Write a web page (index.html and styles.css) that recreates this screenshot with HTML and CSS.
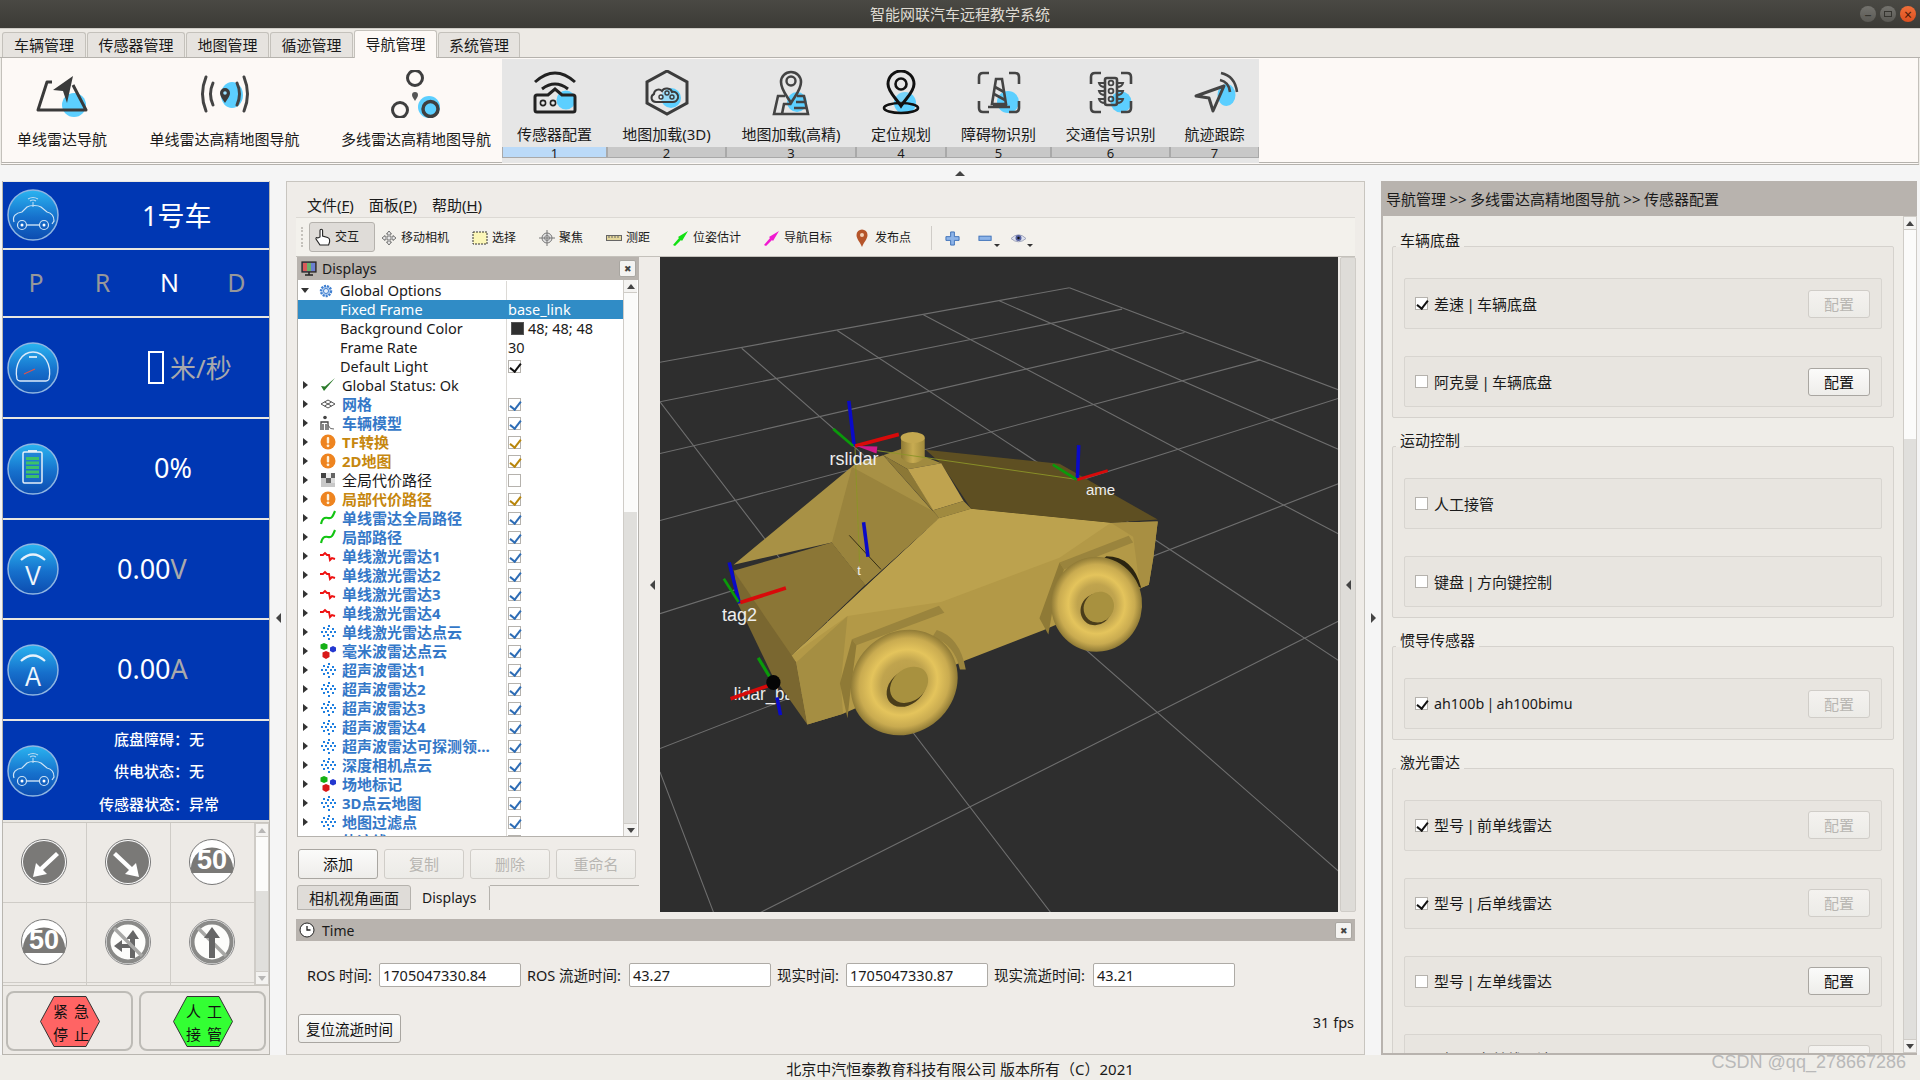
FILE: index.html
```html
<!DOCTYPE html>
<html lang="zh-CN">
<head>
<meta charset="utf-8">
<title>智能网联汽车远程教学系统</title>
<link rel="stylesheet" href="styles.css">
</head>
<body>
<svg class="defs" width="0" height="0" aria-hidden="true">
  <defs>
    <linearGradient id="orb" x1="0" y1="0" x2="0" y2="1"><stop offset="0" stop-color="#2ab4f0"/><stop offset=".55" stop-color="#1670cc"/><stop offset="1" stop-color="#0c4cb0"/></linearGradient>
    <linearGradient id="cyl" x1="0" y1="0" x2="1" y2="0"><stop offset="0" stop-color="#8f7a34"/><stop offset=".5" stop-color="#c8ac52"/><stop offset="1" stop-color="#a08a3c"/></linearGradient>
    <radialGradient id="tire" cx=".5" cy=".5" r=".5"><stop offset="0" stop-color="#b59a48"/><stop offset=".42" stop-color="#c0a44e"/><stop offset=".62" stop-color="#e4c45c"/><stop offset=".84" stop-color="#c9ab50"/><stop offset="1" stop-color="#8f7a36"/></radialGradient>
    <clipPath id="ame-clip"><rect x="420" y="228" width="50" height="20"/></clipPath>
    <symbol id="car" viewBox="0 0 52 52"><path d="M7 33c-2-6 2-9 8-10l5-5c3-2 11-2 14 0l6 5c5 1 7 4 7 9l-2 3" fill="none" stroke="#cfe4f6" stroke-width="1.200"/><path d="M26 18v-5M21 10q5-3 10 0M23 12q3-2 6 0" fill="none" stroke="#b8daf2" stroke-width="1.100"/><path d="M20 36h12" stroke="#dcecf9" stroke-width="1.300"/><circle cx="15" cy="36" r="4.500" fill="none" stroke="#cfe4f6" stroke-width="1.200"/><circle cx="37" cy="36" r="4.500" fill="none" stroke="#cfe4f6" stroke-width="1.200"/><circle cx="15" cy="36" r="1.500" fill="#fff"/><circle cx="37" cy="36" r="1.500" fill="#fff"/></symbol>
    <symbol id="i-gear" viewBox="0 0 16 16"><circle cx="8" cy="8" r="5" fill="#bcd4f2" stroke="#3f7fd0" stroke-width="2.400" stroke-dasharray="2 1"/><circle cx="8" cy="8" r="2.500" fill="#e8f0fb" stroke="#3f7fd0"/></symbol>
    <symbol id="i-check" viewBox="0 0 16 16"><path d="M1 9l3 5 11-13-10 8.500z" fill="#2b7a2b"/></symbol>
    <symbol id="i-grid" viewBox="0 0 16 16"><path d="M1 8l7-4 7 4-7 4zM4.500 6l7 4M11.500 6l-7 4" fill="none" stroke="#555" stroke-width="1"/></symbol>
    <symbol id="i-robot" viewBox="0 0 16 16"><circle cx="5" cy="2.500" r="1.800" fill="#444"/><path d="M1 15V7h7v8M3 9v6M6 9v6" fill="none" stroke="#444" stroke-width="1.300"/><path d="M8 10q2 5 6 4" fill="none" stroke="#666"/></symbol>
    <symbol id="i-warn" viewBox="0 0 16 16"><circle cx="8" cy="8" r="7.500" fill="#ee8420"/><rect x="6.800" y="3" width="2.400" height="6.500" rx="1" fill="#fff3dc"/><circle cx="8" cy="11.800" r="1.400" fill="#fff3dc"/></symbol>
    <symbol id="i-map" viewBox="0 0 16 16"><path d="M1 1h5v5H1z" fill="#444"/><path d="M6 6h5v5H6zM11 1h4v5h-4z" fill="#666"/><path d="M1 6h5v9H1zM6 11h9v4H6z" fill="#c8c8c8"/><path d="M6 1h5v5H6z" fill="#eee"/><path d="M11 6h4v5h-4z" fill="#ddd"/></symbol>
    <symbol id="i-path" viewBox="0 0 16 16"><path d="M1 14c1-5 3-7 7-6s5-2 7-7" fill="none" stroke="#12c412" stroke-width="2.200"/></symbol>
    <symbol id="i-scan" viewBox="0 0 16 16"><path d="M0 7l3 0 2-2 2 2 2 0 1 5 2-2 3 1" fill="none" stroke="#ee1111" stroke-width="1.900"/></symbol>
    <symbol id="i-cloud" viewBox="0 0 16 16"><g fill="#1f7fe0"><rect x="8" y="1" width="2" height="2"/><rect x="3" y="3" width="2" height="2"/><rect x="7" y="4" width="2" height="2"/><rect x="12" y="4" width="2" height="2"/><rect x="1" y="7" width="2" height="2"/><rect x="5" y="7" width="2" height="2"/><rect x="10" y="7" width="2" height="2"/><rect x="14" y="7" width="2" height="2"/><rect x="3" y="11" width="2" height="2"/><rect x="7" y="10" width="2" height="2"/><rect x="12" y="11" width="2" height="2"/><rect x="8" y="14" width="2" height="2"/></g></symbol>
    <symbol id="i-rgb" viewBox="0 0 16 16"><path d="M4 0l3.500 1.500V5.500L4 7 .5 5.500v-4z" fill="#14b014"/><path d="M13 3l3 1.500V8l-3 1.500L10 8V4.500z" fill="#2438d0"/><path d="M6 8l3.500 1.500V14L6 16l-3.500-2V9.500z" fill="#d81818"/></symbol>
  </defs>
</svg>

<header class="titlebar">
  <span></span>
  <span class="title-text">智能网联汽车远程教学系统</span>
  <div class="win-btns"><i class="wbtn">&#8211;</i><i class="wbtn"><b class="wbox"></b></i><i class="wbtn wclose">&#215;</i></div>
</header>

<nav class="tabs">
  <span class="tab w84">车辆管理</span><span class="tab w98">传感器管理</span><span class="tab w83">地图管理</span><span class="tab w83">循迹管理</span><span class="tab tab-on w83">导航管理</span><span class="tab w82">系统管理</span>
</nav>

<section class="ribbon">
  <div class="rib-item ri-1">
    <svg class="rib-icon" viewBox="0 0 60 48"><ellipse cx="42" cy="35" rx="12" ry="12" fill="#5ccfff"/><path d="M20 12h-5L6 40h48L41 15" fill="none" stroke="#3a3a3a" stroke-width="3" stroke-linejoin="round"/><path d="M41 6L21 20l10 1 4 12z" fill="#3a3a3a"/></svg>
    <span>单线雷达导航</span>
  </div>
  <div class="rib-item ri-2">
    <svg class="rib-icon" viewBox="0 0 60 48"><ellipse cx="37" cy="25" rx="11" ry="13" fill="#5ccfff"/><path d="M11 7Q4 24 11 41M18 13Q13 24 18 35M49 7Q56 24 49 41M42 13Q47 24 42 35" fill="none" stroke="#444" stroke-width="3" stroke-linecap="round"/><path d="M30 33c-2-3-5-7-5-10a5 5 0 0 1 10 0c0 3-3 7-5 10z" fill="#3a3a3a"/><circle cx="30" cy="23" r="1.800" fill="#9adfff"/></svg>
    <span>单线雷达高精地图导航</span>
  </div>
  <div class="rib-item ri-3">
    <svg class="rib-icon" viewBox="0 0 60 48"><circle cx="43" cy="37" r="11" fill="#5ccfff"/><circle cx="29" cy="8" r="7.500" fill="none" stroke="#3f3f3f" stroke-width="3"/><circle cx="14" cy="40" r="7.500" fill="none" stroke="#3f3f3f" stroke-width="3"/><circle cx="44.500" cy="39" r="7.500" fill="none" stroke="#3f3f3f" stroke-width="3.500"/><path d="M29 31c-1-2-3-4-3-6a3 3 0 0 1 6 0c0 2-2 4-3 6z" fill="#555"/></svg>
    <span>多线雷达高精地图导航</span>
  </div>
  <div class="rib-group">
    <div class="g-item w105">
      <svg class="g-icon" viewBox="0 0 60 48"><circle cx="41" cy="30" r="9.500" fill="#5ccfff"/><path d="M10 12Q30-6 50 12M17 19Q30 9 43 19" fill="none" stroke="#222" stroke-width="3"/><path d="M12 25h11l7-6 7 6h11q2 0 2 2v13q0 2-2 2H12q-2 0-2-2V27q0-2 2-2z" fill="none" stroke="#222" stroke-width="3"/><circle cx="18" cy="33" r="2.600" fill="none" stroke="#222" stroke-width="1.600"/><circle cx="28" cy="33" r="2.600" fill="none" stroke="#222" stroke-width="1.600"/></svg>
      <span class="g-label">传感器配置</span><b class="g-num g-num-on">1</b>
    </div>
    <div class="g-item w119">
      <svg class="g-icon" viewBox="0 0 60 48"><circle cx="34" cy="28" r="10" fill="#5ccfff"/><path d="M30 1l20 11v21L30 44 10 33V12z" fill="none" stroke="#3c3c3c" stroke-width="3"/><path d="M19 32c-5 0-6-6-2-8 0-4 5-6 8-3 2-4 9-3 10 1 4-1 7 3 6 6-1 3-3 4-5 4z" fill="#eee" fill-opacity=".4" stroke="#3c3c3c" stroke-width="2"/><g fill="none" stroke="#3c3c3c" stroke-width="1.400"><circle cx="24" cy="27" r="2"/><circle cx="30" cy="23" r="2"/><circle cx="35" cy="27" r="2"/></g></svg>
      <span class="g-label">地图加载(3D)</span><b class="g-num">2</b>
    </div>
    <div class="g-item w130">
      <svg class="g-icon" viewBox="0 0 60 48"><circle cx="36" cy="32" r="10" fill="#5ccfff"/><path d="M30 33C26 26 20 20 20 12a10 10 0 0 1 20 0c0 8-6 14-10 21z" fill="none" stroke="#444" stroke-width="2.600"/><circle cx="30" cy="11" r="4.500" fill="none" stroke="#444" stroke-width="2.400"/><path d="M24 26H17l-4 18h34l-4-18h-7M21 44l2-10h7M33 38h13M35 32h9" fill="none" stroke="#444" stroke-width="2.600"/></svg>
      <span class="g-label">地图加载(高精)</span><b class="g-num">3</b>
    </div>
    <div class="g-item w90">
      <svg class="g-icon" viewBox="0 0 60 48"><circle cx="34" cy="33" r="11" fill="#5ccfff"/><ellipse cx="30" cy="38" rx="17" ry="5" fill="none" stroke="#111" stroke-width="2.600"/><path d="M30 36C25 28 17 22 17 14a13 13 0 0 1 26 0c0 8-8 14-13 22z" fill="#e6e6e6" fill-opacity=".2" stroke="#111" stroke-width="3"/><circle cx="30" cy="14" r="5.500" fill="none" stroke="#111" stroke-width="2.600"/></svg>
      <span class="g-label">定位规划</span><b class="g-num">4</b>
    </div>
    <div class="g-item w105">
      <svg class="g-icon" viewBox="0 0 60 48"><circle cx="39" cy="32" r="11" fill="#5ccfff"/><path d="M10 14V7q0-4 4-4h6M40 3h6q4 0 4 4v7M10 31v7q0 4 4 4h6M40 42h6q4 0 4-4v-7" fill="none" stroke="#444" stroke-width="2.600"/><path d="M27 9h6l4 25H23zM24 35h14M19 37h22" fill="none" stroke="#444" stroke-width="2.600"/><path d="M26 17l9 5M25 24l11 6" stroke="#444" stroke-width="2.600"/></svg>
      <span class="g-label">障碍物识别</span><b class="g-num">5</b>
    </div>
    <div class="g-item w119">
      <svg class="g-icon" viewBox="0 0 60 48"><circle cx="40" cy="32" r="10.500" fill="#5ccfff"/><path d="M10 14V7q0-4 4-4h6M40 3h6q4 0 4 4v7M10 31v7q0 4 4 4h6M40 42h6q4 0 4-4v-7" fill="none" stroke="#444" stroke-width="2.600"/><rect x="24" y="8" width="12" height="27" rx="2" fill="none" stroke="#444" stroke-width="2.600"/><path d="M24 13h-6q1 4 6 4M24 21h-6q1 4 6 4M24 29h-6q1 4 6 4M36 13h6q-1 4-6 4M36 21h6q-1 4-6 4M36 29h6q-1 4-6 4" fill="none" stroke="#444" stroke-width="2"/><g fill="none" stroke="#444" stroke-width="1.800"><circle cx="30" cy="13" r="2.400"/><circle cx="30" cy="21" r="2.400"/><circle cx="30" cy="29" r="2.400"/></g></svg>
      <span class="g-label">交通信号识别</span><b class="g-num">6</b>
    </div>
    <div class="g-item w89">
      <svg class="g-icon" viewBox="0 0 60 48"><ellipse cx="41.500" cy="25" rx="9" ry="11" fill="#5ccfff"/><path d="M39 16L11 26l13 2 4 13z" fill="none" stroke="#444" stroke-width="3" stroke-linejoin="round"/><path d="M36 3Q50 6 52 22M35 10q9 2 10 12" fill="none" stroke="#444" stroke-width="2.600"/></svg>
      <span class="g-label">航迹跟踪</span><b class="g-num">7</b>
    </div>
  </div>
</section>

<div class="sash"><i class="tri-up"></i></div>

<main class="main">
  <aside class="left">
    <div class="stat h66">
      <svg class="orb" viewBox="0 0 52 52"><circle cx="26" cy="26" r="25" fill="url(#orb)" stroke="#8fb6e2" stroke-width="1.500"/><use href="#car"/></svg>
      <span class="val v-car">1号车</span>
    </div>
    <div class="gears h66"><span>P</span><span>R</span><span class="gear-on">N</span><span>D</span></div>
    <div class="stat h99">
      <svg class="orb" viewBox="0 0 52 52"><circle cx="26" cy="26" r="25" fill="url(#orb)" stroke="#8fb6e2" stroke-width="1.500"/><path d="M10 37C7 22 15 10 26 10s19 12 16 27q-1 2-3 2H13q-2 0-3-2z" fill="none" stroke="#dbeafa" stroke-width="1.300"/><path d="M22 15h8" stroke="#fff" stroke-width="1.500"/><path d="M17 32l11-5" stroke="#e0524a" stroke-width="1.200"/></svg>
      <span class="val v-speed"><i class="tofu"></i><em class="dim">米/秒</em></span>
    </div>
    <div class="stat h99">
      <svg class="orb" viewBox="0 0 52 52"><circle cx="26" cy="26" r="25" fill="url(#orb)" stroke="#8fb6e2" stroke-width="1.500"/><path d="M21 9V7h9v2" fill="#dfe9f5"/><rect x="16" y="9" width="19" height="31" rx="1.500" fill="#1f6ec8" fill-opacity=".5" stroke="#e6f0f9" stroke-width="1.500"/><g fill="#3cc06a"><rect x="19" y="14" width="13" height="3"/><rect x="19" y="18.500" width="13" height="3"/><rect x="19" y="23" width="13" height="3"/><rect x="19" y="27.500" width="13" height="3"/><rect x="19" y="32" width="13" height="3"/></g></svg>
      <span class="val v-pct">0%</span>
    </div>
    <div class="stat h98">
      <svg class="orb" viewBox="0 0 52 52"><circle cx="26" cy="26" r="25" fill="url(#orb)" stroke="#8fb6e2" stroke-width="1.500"/><path d="M14 17Q26 6 38 17" fill="none" stroke="#e8f2fb" stroke-width="2.200"/><text x="26" y="42" text-anchor="middle" textLength="16" lengthAdjust="spacingAndGlyphs" class="orb-letter">V</text></svg>
      <span class="val v-num">0.00<em class="dim">V</em></span>
    </div>
    <div class="stat h99">
      <svg class="orb" viewBox="0 0 52 52"><circle cx="26" cy="26" r="25" fill="url(#orb)" stroke="#8fb6e2" stroke-width="1.500"/><path d="M14 17Q26 6 38 17" fill="none" stroke="#e8f2fb" stroke-width="2.200"/><text x="26" y="42" text-anchor="middle" textLength="16" lengthAdjust="spacingAndGlyphs" class="orb-letter">A</text></svg>
      <span class="val v-num">0.00<em class="dim">A</em></span>
    </div>
    <div class="stat h99">
      <svg class="orb" viewBox="0 0 52 52"><circle cx="26" cy="26" r="25" fill="url(#orb)" stroke="#8fb6e2" stroke-width="1.500"/><use href="#car"/></svg>
      <dl class="status">
        <dt>底盘障碍：</dt><dd>无</dd>
        <dt>供电状态：</dt><dd>无</dd>
        <dt>传感器状态：</dt><dd>异常</dd>
      </dl>
    </div>
    <div class="signs-wrap">
      <div class="signs">
        <div class="sign"><svg viewBox="0 0 46 46"><circle cx="23" cy="23" r="22.500" fill="#fff" stroke="#777"/><circle cx="23" cy="23" r="21" fill="#7a7977"/><path d="M35 13L19 28l-4-4-3 14 14-3-4-4 16-15z" fill="#fff"/></svg></div>
        <div class="sign"><svg viewBox="0 0 46 46"><circle cx="23" cy="23" r="22.500" fill="#fff" stroke="#777"/><circle cx="23" cy="23" r="21" fill="#7a7977"/><path d="M11 13L27 28l4-4 3 14-14-3 4-4L8 16z" fill="#fff"/></svg></div>
        <div class="sign"><svg viewBox="0 0 46 46"><circle cx="23" cy="23" r="22.500" fill="#fff" stroke="#777"/><path d="M2.500 34A21 21 0 1 1 43.500 34z" fill="#7a7977"/><text x="23" y="30" text-anchor="middle" class="sign-num">50</text></svg></div>
        <div class="sign"><svg viewBox="0 0 46 46"><circle cx="23" cy="23" r="22.500" fill="#fff" stroke="#777"/><path d="M2.500 34A21 21 0 1 1 43.500 34z" fill="#7a7977"/><text x="23" y="30" text-anchor="middle" class="sign-num">50</text></svg></div>
        <div class="sign"><svg viewBox="0 0 46 46"><circle cx="23" cy="23" r="22.500" fill="#fff" stroke="#888"/><circle cx="23" cy="23" r="19.500" fill="#fdfdfb" stroke="#8a8a88" stroke-width="4"/><path d="M28 11l6 9h-4v19h-5V29H17v4l-8-6 8-6v4h8V20h-4z" fill="#666"/><path d="M9 9l28 28" stroke="#a8a8a6" stroke-width="3.500"/></svg></div>
        <div class="sign"><svg viewBox="0 0 46 46"><circle cx="23" cy="23" r="22.500" fill="#fff" stroke="#888"/><circle cx="23" cy="23" r="19.500" fill="#fdfdfb" stroke="#8a8a88" stroke-width="4"/><path d="M9 9l28 28" stroke="#a8a8a6" stroke-width="3.500"/><path d="M23 8l8 11h-5v20h-6V19h-5z" fill="#666"/></svg></div>
        <div class="sign"></div><div class="sign"></div><div class="sign"></div>
      </div>
      <div class="vbar vbar-left"><i class="sb-btn"><b class="tri-u"></b></i><i class="sb-thumb t-signs"></i><i class="sb-fill"></i><i class="sb-btn sb-low"><b class="tri-d"></b></i></div>
    </div>
    <div class="stops">
      <button class="stop-btn"><svg viewBox="0 0 60 51" class="hex"><polygon points="14,.5 46,.5 59.500,25.500 46,50.500 14,50.500 .5,25.500" fill="#ff6464" stroke="#333"/><text x="13" y="21" class="hex-t">紧</text><text x="34" y="21" class="hex-t">急</text><text x="13" y="44" class="hex-t">停</text><text x="34" y="44" class="hex-t">止</text></svg></button>
      <button class="stop-btn"><svg viewBox="0 0 60 51" class="hex"><polygon points="14,.5 46,.5 59.500,25.500 46,50.500 14,50.500 .5,25.500" fill="#33ff33" stroke="#333"/><text x="13" y="21" class="hex-t">人</text><text x="34" y="21" class="hex-t">工</text><text x="13" y="44" class="hex-t">接</text><text x="34" y="44" class="hex-t">管</text></svg></button>
    </div>
  </aside>

  <div class="gutter"><i class="tri-l"></i></div>

  <section class="mid">
    <div class="menubar"><span>文件(<u>F</u>)</span><span>面板(<u>P</u>)</span><span>帮助(<u>H</u>)</span></div>
    <div class="toolbar">
      <i class="grip"></i>
      <div class="tool tool-on"><svg class="t-ico" viewBox="0 0 18 18"><path d="M6 9V2.500a1.300 1.300 0 0 1 2.600 0V8l5 1.500q2 .7 2 2.500v2l-1 3H6l-4-6q-.5-2 2-1z" fill="#fff" stroke="#222" stroke-width="1.100"/></svg><span>交互</span></div>
      <div class="tool"><svg class="t-ico" viewBox="0 0 16 16"><path d="M8 1l2.500 3h-1.500v3h3V5.500L15 8l-3 2.500V9H9v3h1.500L8 15l-2.500-3H7V9H4v1.500L1 8l3-2.500V7h3V4H5.500z" fill="#e8e8e8" stroke="#666" stroke-width=".9"/></svg><span>移动相机</span></div>
      <div class="tool"><svg class="t-ico" viewBox="0 0 16 16"><rect x="1" y="2" width="14" height="12" fill="#fbf6b8" stroke="#333" stroke-dasharray="2 1"/></svg><span>选择</span></div>
      <div class="tool"><svg class="t-ico" viewBox="0 0 16 16"><circle cx="8" cy="8" r="5" fill="#e4e4e4" stroke="#777"/><circle cx="8" cy="8" r="2.500" fill="none" stroke="#888"/><path d="M8 0v16M0 8h16" stroke="#777"/></svg><span>聚焦</span></div>
      <div class="tool"><svg class="t-ico" viewBox="0 0 16 16"><rect x="0.500" y="5.500" width="15" height="5" fill="#e3d69a" stroke="#666"/><path d="M3 6v2M6 6v2M9 6v2M12 6v2" stroke="#666"/></svg><span>测距</span></div>
      <div class="tool"><svg class="t-ico" viewBox="0 0 16 16"><path d="M0 15l6-7-1-1 10-6-6 10-1-1-6 6z" fill="#12e012"/></svg><span>位姿估计</span></div>
      <div class="tool"><svg class="t-ico" viewBox="0 0 16 16"><path d="M0 15l6-7-1-1 10-6-6 10-1-1-6 6z" fill="#f01ad0"/></svg><span>导航目标</span></div>
      <div class="tool tool-pin"><svg class="t-ico t-pin" viewBox="0 0 14 18"><path d="M7 18C5 13 1.500 10 1.500 6a5.500 5.500 0 0 1 11 0c0 4-3.500 7-5.500 12z" fill="#b5552a"/><circle cx="7" cy="6" r="2" fill="#f2d2b8"/></svg><span>发布点</span></div>
      <i class="t-sep"></i>
      <div class="t-mini"><svg viewBox="0 0 16 16"><path d="M6 1h4v5h5v4h-5v5H6v-5H1V6h5z" fill="#8db4e8" stroke="#3c70b8"/></svg></div>
      <div class="t-mini"><svg viewBox="0 0 16 16"><rect x="1" y="5.500" width="13" height="4.500" fill="#8db4e8" stroke="#3c70b8"/></svg><i class="drop"></i></div>
      <div class="t-mini"><svg viewBox="0 0 16 16"><path d="M0 8q8-8 16 0-8 7-16 0z" fill="#dfe2ef" stroke="#9aa0b8"/><circle cx="8" cy="7.500" r="3.200" fill="#5360a0"/><circle cx="8" cy="7.500" r="1.300" fill="#111"/></svg><i class="drop"></i></div>
    </div>

    <div class="workspace">
      <div class="dock">
        <div class="dock-title"><svg class="dt-ico" viewBox="0 0 16 16"><rect x="1" y="1" width="14" height="10" fill="#6a5d7a" stroke="#222" stroke-width="1.200"/><rect x="2" y="2" width="4" height="8" fill="#d85a5a"/><rect x="6" y="2" width="4" height="8" fill="#6ab06a"/><rect x="10" y="2" width="4" height="8" fill="#6a7fd0"/><path d="M4 14h8M8 11v3" stroke="#222" stroke-width="1.500"/></svg><span class="dt-txt">Displays</span><i class="dt-x">&#10006;</i></div>
        <div class="tree-box">
          <div class="tree">
            <div class="row"><div class="n"><i class="ar ar-d"></i><svg class="ti"><use href="#i-gear"/></svg><span class="lat">Global Options</span></div><div class="v"></div></div>
            <div class="row sel"><div class="n sub"><span class="lat">Fixed Frame</span></div><div class="v"><span class="lat">base_link</span></div></div>
            <div class="row"><div class="n sub"><span class="lat">Background Color</span></div><div class="v"><i class="swatch"></i><span class="lat">48; 48; 48</span></div></div>
            <div class="row"><div class="n sub"><span class="lat">Frame Rate</span></div><div class="v"><span class="lat">30</span></div></div>
            <div class="row"><div class="n sub"><span class="lat">Default Light</span></div><div class="v"><i class="chk on ck-k"></i></div></div>
            <div class="row"><div class="n"><i class="ar"></i><svg class="ti"><use href="#i-check"/></svg><span class="lat">Global Status: Ok</span></div><div class="v"></div></div>
            <div class="row"><div class="n c-b"><i class="ar"></i><svg class="ti"><use href="#i-grid"/></svg><span>网格</span></div><div class="v"><i class="chk on ck-b"></i></div></div>
            <div class="row"><div class="n c-b"><i class="ar"></i><svg class="ti"><use href="#i-robot"/></svg><span>车辆模型</span></div><div class="v"><i class="chk on ck-b"></i></div></div>
            <div class="row"><div class="n c-o"><i class="ar"></i><svg class="ti"><use href="#i-warn"/></svg><span>TF转换</span></div><div class="v"><i class="chk on ck-o"></i></div></div>
            <div class="row"><div class="n c-o"><i class="ar"></i><svg class="ti"><use href="#i-warn"/></svg><span>2D地图</span></div><div class="v"><i class="chk on ck-o"></i></div></div>
            <div class="row"><div class="n"><i class="ar"></i><svg class="ti"><use href="#i-map"/></svg><span>全局代价路径</span></div><div class="v"><i class="chk"></i></div></div>
            <div class="row"><div class="n c-o"><i class="ar"></i><svg class="ti"><use href="#i-warn"/></svg><span>局部代价路径</span></div><div class="v"><i class="chk on ck-o"></i></div></div>
            <div class="row"><div class="n c-b"><i class="ar"></i><svg class="ti"><use href="#i-path"/></svg><span>单线雷达全局路径</span></div><div class="v"><i class="chk on ck-b"></i></div></div>
            <div class="row"><div class="n c-b"><i class="ar"></i><svg class="ti"><use href="#i-path"/></svg><span>局部路径</span></div><div class="v"><i class="chk on ck-b"></i></div></div>
            <div class="row"><div class="n c-b"><i class="ar"></i><svg class="ti"><use href="#i-scan"/></svg><span>单线激光雷达1</span></div><div class="v"><i class="chk on ck-b"></i></div></div>
            <div class="row"><div class="n c-b"><i class="ar"></i><svg class="ti"><use href="#i-scan"/></svg><span>单线激光雷达2</span></div><div class="v"><i class="chk on ck-b"></i></div></div>
            <div class="row"><div class="n c-b"><i class="ar"></i><svg class="ti"><use href="#i-scan"/></svg><span>单线激光雷达3</span></div><div class="v"><i class="chk on ck-b"></i></div></div>
            <div class="row"><div class="n c-b"><i class="ar"></i><svg class="ti"><use href="#i-scan"/></svg><span>单线激光雷达4</span></div><div class="v"><i class="chk on ck-b"></i></div></div>
            <div class="row"><div class="n c-b"><i class="ar"></i><svg class="ti"><use href="#i-cloud"/></svg><span>单线激光雷达点云</span></div><div class="v"><i class="chk on ck-b"></i></div></div>
            <div class="row"><div class="n c-b"><i class="ar"></i><svg class="ti"><use href="#i-rgb"/></svg><span>毫米波雷达点云</span></div><div class="v"><i class="chk on ck-b"></i></div></div>
            <div class="row"><div class="n c-b"><i class="ar"></i><svg class="ti"><use href="#i-cloud"/></svg><span>超声波雷达1</span></div><div class="v"><i class="chk on ck-b"></i></div></div>
            <div class="row"><div class="n c-b"><i class="ar"></i><svg class="ti"><use href="#i-cloud"/></svg><span>超声波雷达2</span></div><div class="v"><i class="chk on ck-b"></i></div></div>
            <div class="row"><div class="n c-b"><i class="ar"></i><svg class="ti"><use href="#i-cloud"/></svg><span>超声波雷达3</span></div><div class="v"><i class="chk on ck-b"></i></div></div>
            <div class="row"><div class="n c-b"><i class="ar"></i><svg class="ti"><use href="#i-cloud"/></svg><span>超声波雷达4</span></div><div class="v"><i class="chk on ck-b"></i></div></div>
            <div class="row"><div class="n c-b"><i class="ar"></i><svg class="ti"><use href="#i-cloud"/></svg><span>超声波雷达可探测领…</span></div><div class="v"><i class="chk on ck-b"></i></div></div>
            <div class="row"><div class="n c-b"><i class="ar"></i><svg class="ti"><use href="#i-cloud"/></svg><span>深度相机点云</span></div><div class="v"><i class="chk on ck-b"></i></div></div>
            <div class="row"><div class="n c-b"><i class="ar"></i><svg class="ti"><use href="#i-rgb"/></svg><span>场地标记</span></div><div class="v"><i class="chk on ck-b"></i></div></div>
            <div class="row"><div class="n c-b"><i class="ar"></i><svg class="ti"><use href="#i-cloud"/></svg><span>3D点云地图</span></div><div class="v"><i class="chk on ck-b"></i></div></div>
            <div class="row"><div class="n c-b"><i class="ar"></i><svg class="ti"><use href="#i-cloud"/></svg><span>地图过滤点</span></div><div class="v"><i class="chk on ck-b"></i></div></div>
            <div class="row"><div class="n c-b"><i class="ar"></i><svg class="ti"><use href="#i-scan"/></svg><span>轨迹线</span></div><div class="v"><i class="chk on ck-b"></i></div></div>
          </div>
          <div class="vbar vbar-tree"><i class="sb-btn"><b class="tri-u"></b></i><i class="sb-thumb t-tree"></i><i class="sb-fill"></i><i class="sb-btn sb-low"><b class="tri-d"></b></i></div>
        </div>
        <div class="handle"></div>
        <div class="dock-btns"><button class="btn">添加</button><button class="btn" disabled>复制</button><button class="btn" disabled>删除</button><button class="btn" disabled>重命名</button></div>
        <div class="dock-tabs"><span class="dtab">相机视角画面</span><span class="dtab dtab-on">Displays</span><i class="dtab-line"></i></div>
      </div>

      <div class="view-arrow"><i class="tri-l"></i></div>

      <svg class="viewport" viewBox="0 0 678 655" preserveAspectRatio="none">
        <rect width="678" height="655" fill="#2e2e2e"/>
        <g transform="translate(0,-67) scale(0.4464,0.4655)">
          <g fill="none" stroke="#6e6e6e" stroke-width="2.400">
            <path d="M917 210L0 370M1035 256L0 455M1175 306L0 566M1345 365L0 710M1522 447L0 910M1522 630L0 1200M1522 925L225 1552"/>
            <path d="M917 210L1522 430M760 238L1522 558M590 268L1522 740M397 302L1522 1012M183 340L1522 1465M0 455L875 1552M0 1250L120 1552"/>
          </g>
          <text x="165" y="1095" class="lbl lbl-sq">lidar_ba</text>
          <path d="M220 1005L245 1045" stroke="#0a9a0a" stroke-width="7"/>
          <!-- body -->
          <polygon points="165,815 295,995 305,1015 330,1148 250,1040 175,890" fill="#7a6730"/>
          <polygon points="165,805 435,590 500,570 625,705 460,848 385,757" fill="#a89145"/>
          <polygon points="385,757 460,848 295,1000 165,818" fill="#8b7636"/>
          <polygon points="430,595 612,690 625,705 460,848 385,757" fill="#9a843d"/>
          <polygon points="295,1000 625,705 697,685 1010,715 1115,712 1105,790 1095,848 860,945 685,1010 410,1125 330,1148 305,1015" fill="#b39947"/>
          <polygon points="295,1000 625,705 697,685 1010,715 895,790 630,885 420,915" fill="#bca24e"/>
          <polygon points="1010,715 1115,712 1105,790 1095,848 1075,855 1060,745" fill="#a88f42"/>
          <polygon points="305,1015 420,915 405,1060 410,1125 330,1148" fill="#a58e42"/>
          <polygon points="595,558 895,588 1115,708 1010,715 697,685 630,588" fill="#5e4f22"/>
          <polygon points="500,570 545,555 630,587 555,600" fill="#a08a3f"/>
          <polygon points="500,570 555,600 625,705 612,690" fill="#8c7836"/>
          <polygon points="555,600 630,587 680,668 612,688" fill="#bfa34f"/>
          <polygon points="612,688 680,668 697,685 625,705" fill="#a08a3f"/>
          <polygon points="430,965 625,893 637,908 440,978" fill="#9a843d"/>
          <polygon points="895,800 1050,743 1060,757 905,815" fill="#9a843d"/>
          <polygon points="895,800 850,920 870,955 885,870 905,815" fill="#8f7a36"/>
          <polygon points="430,965 403,1060 420,1135 425,1090 440,978" fill="#8f7a36"/>
          <path d="M620 945Q672 960 685 1030L672 1030Q660 975 610 960z" fill="#9a843d"/>
          <path d="M1000 787Q1060 787 1078 855L1070 852Q1050 805 990 795z" fill="#2b2410"/>
          <!-- lidar -->
          <path d="M540 532V575Q566 598 593 575V532z" fill="url(#cyl)"/>
          <ellipse cx="566" cy="532" rx="27" ry="12" fill="#c4a850"/>
          <!-- wheels -->
          <ellipse cx="547" cy="1058" rx="123" ry="110" transform="rotate(-30 547 1058)" fill="url(#tire)"/>
          <ellipse cx="552" cy="1070" rx="48" ry="36" transform="rotate(-35 552 1070)" fill="#4a3d1a"/>
          <ellipse cx="558" cy="1063" rx="46" ry="35" transform="rotate(-35 558 1063)" fill="#a8913f"/>
          <ellipse cx="978" cy="890" rx="102" ry="102" transform="rotate(-30 978 890)" fill="url(#tire)"/>
          <ellipse cx="977" cy="901" rx="36" ry="33" transform="rotate(-35 977 901)" fill="#4a3d1a"/>
          <ellipse cx="983" cy="896" rx="35" ry="32" transform="rotate(-35 983 896)" fill="#a8913f"/>
          <!-- links -->
          <path d="M437 555L447 800M487 560L935 622" stroke="#8c9428" stroke-width="2" fill="none"/>
          <path d="M424 742L495 815" stroke="#2a2410" stroke-width="2"/>
          <!-- axes -->
          <g fill="none" stroke-width="8">
            <path d="M435 550L423 453" stroke="#0a0ac8"/><path d="M433 550L388 513" stroke="#0a9a0a" stroke-width="6"/><path d="M437 550L535 525" stroke="#d80a0a"/>
            <path d="M935 622L938 548" stroke="#0a0ac8"/><path d="M933 622L880 590" stroke="#0a9a0a" stroke-width="6"/><path d="M935 622L1003 603" stroke="#d80a0a" stroke-width="6"/>
            <path d="M456 714L466 788" stroke="#0a0ac8"/>
            <path d="M178 888L155 800" stroke="#0a0ac8"/><path d="M176 885L143 835" stroke="#0a9a0a" stroke-width="6"/><path d="M180 886L282 855" stroke="#d80a0a"/>
            <path d="M158 1093L242 1065" stroke="#d80a0a"/><path d="M262 1090L270 1128" stroke="#0a0ac8"/>
          </g>
          <path d="M440 550L487 551 485 566z" fill="#d0198a"/>
          <circle cx="254" cy="1058" r="16" fill="#050505"/>
        </g>
        <text x="194" y="208" text-anchor="middle" class="lbl">rslidar</text>
        <text x="79.500" y="364" text-anchor="middle" class="lbl">tag2</text>
        <text x="199" y="318" text-anchor="middle" class="lbl lbl-sm">t</text>
        <text x="426" y="238" class="lbl lbl-md" clip-path="url(#ame-clip)">ame</text>
      </svg>

      <div class="view-strip"><i class="tri-l"></i></div>
    </div>
    <div class="bar-handle"></div>

    <div class="time">
      <div class="dock-title time-title"><svg class="dt-ico" viewBox="0 0 16 16"><circle cx="8" cy="8" r="7" fill="#fff" stroke="#222"/><path d="M8 4v4h3.500" fill="none" stroke="#222" stroke-width="1.300"/></svg><span class="dt-txt">Time</span><i class="dt-x">&#10006;</i></div>
      <div class="time-row">
        <label class="w1">ROS 时间:</label><span class="inp">1705047330.84</span>
        <label class="w2">ROS 流逝时间:</label><span class="inp">43.27</span>
        <label class="w3">现实时间:</label><span class="inp">1705047330.87</span>
        <label class="w4">现实流逝时间:</label><span class="inp">43.21</span>
      </div>
      <div class="time-foot"><button class="btn btn-reset">复位流逝时间</button><span class="fps">31 fps</span></div>
    </div>
  </section>

  <div class="gutter"><i class="tri-r"></i></div>

  <section class="right">
    <div class="crumb">导航管理 &gt;&gt; 多线雷达高精地图导航 &gt;&gt; 传感器配置</div>
    <div class="right-body">
      <div class="cfg">
        <div class="g-title">车辆底盘</div>
        <div class="g-box">
          <div class="opt"><i class="chk on ck-k"></i><span>差速 | 车辆底盘</span><button class="btn cfg-btn" disabled>配置</button></div>
          <div class="opt"><i class="chk"></i><span>阿克曼 | 车辆底盘</span><button class="btn cfg-btn">配置</button></div>
        </div>
        <div class="g-title">运动控制</div>
        <div class="g-box">
          <div class="opt"><i class="chk"></i><span>人工接管</span></div>
          <div class="opt"><i class="chk"></i><span>键盘 | 方向键控制</span></div>
        </div>
        <div class="g-title">惯导传感器</div>
        <div class="g-box g-tight">
          <div class="opt"><i class="chk on ck-k"></i><span class="lat-opt">ah100b | ah100bimu</span><button class="btn cfg-btn" disabled>配置</button></div>
        </div>
        <div class="g-title">激光雷达</div>
        <div class="g-box">
          <div class="opt"><i class="chk on ck-k"></i><span>型号 | 前单线雷达</span><button class="btn cfg-btn" disabled>配置</button></div>
          <div class="opt"><i class="chk on ck-k"></i><span>型号 | 后单线雷达</span><button class="btn cfg-btn" disabled>配置</button></div>
          <div class="opt"><i class="chk"></i><span>型号 | 左单线雷达</span><button class="btn cfg-btn">配置</button></div>
          <div class="opt opt-dim"><i class="chk"></i><span>型号 | 右单线雷达</span><button class="btn cfg-btn" disabled>配置</button></div>
        </div>
      </div>
      <div class="vbar vbar-right"><i class="sb-btn"><b class="tri-u"></b></i><i class="sb-thumb t-right"></i><i class="sb-fill"></i><i class="sb-btn sb-low"><b class="tri-d"></b></i></div>
    </div>
  </section>
</main>

<footer class="footer">北京中汽恒泰教育科技有限公司 版本所有（C）2021<span class="mark">CSDN @qq_278667286</span></footer>
</body>
</html>
```

FILE: styles.css
```css
* { box-sizing: border-box; }
html, body { margin: 0; padding: 0; }
body {
  width: 1920px; height: 1080px; overflow: hidden;
  display: flex; flex-direction: column;
  background: #efedE8; color: #1a1a1a;
  font-family: "Noto Sans", "Noto Sans CJK SC", sans-serif;
  font-size: 15px; line-height: 20px;
}
i, em { font-style: normal; }
svg { display: block; flex: none; }
.defs { width: 0; height: 0; }
button { font: inherit; margin: 0; padding: 0; }

/* title */
.titlebar {
  height: 29px; flex: none; display: grid; grid-template-columns: 1fr auto 1fr; align-items: center;
  background: linear-gradient(#4a4944, #3c3b36); border-bottom: 1px solid #cfccc6;
  color: #dfdbd2; font-size: 15px;
}
.win-btns { display: flex; justify-content: flex-end; gap: 4px; padding-right: 4px; }
.wbtn { width: 16px; height: 16px; border-radius: 50%; background: linear-gradient(#74736e, #5a5954); color: #35342f; font-size: 14px; line-height: 15px; text-align: center; display: flex; align-items: center; justify-content: center; }
.wbox { width: 8px; height: 6px; border: 1px solid #35342f; }
.wclose { background: linear-gradient(#f0703a, #dc4f20); color: #4a1a08; }

/* tabs */
.tabs { height: 29px; flex: none; display: flex; align-items: flex-end; padding-left: 2px; background: #edeae5; border-bottom: 1px solid #b5b2ad; gap: 1px; }
.tab { height: 25px; line-height: 25px; text-align: center; border: 1px solid #c4c1bb; border-bottom: 0; border-radius: 3px 3px 0 0; background: #e6e3df; }
.tab-on { height: 28px; line-height: 27px; background: #fdf9f6; margin-bottom: -1px; position: relative; }
.w84 { width: 84px; } .w98 { width: 98px; } .w83 { width: 83px; } .w82 { width: 82px; }

/* ribbon */
.ribbon { height: 107px; flex: none; display: flex; padding-left: 3px; background: #fdf9f6; border-left: 1px solid #c4c1bb; border-bottom: 3px double #b5b2ad; border-right: 1px solid #c4c1bb; margin-left: 1px; margin-right: 1px; }
.rib-item { display: flex; flex-direction: column; align-items: center; flex: none; padding-top: 12px; }
.rib-icon { width: 60px; height: 48px; margin-bottom: 11px; }
.ri-1 { width: 114px; }
.ri-2 { width: 211px; }
.ri-3 { width: 172px; }
.rib-group { display: flex; background: #e6e6e6; height: 104px; margin-top: 1px; }
.g-item { display: flex; flex-direction: column; align-items: center; height: 100%; }
.w119 { width: 119px; }
.w105 { width: 105px; } .w130 { width: 130px; } .w90 { width: 90px; } .w89 { width: 89px; }
.g-icon { width: 60px; height: 48px; margin-top: 11px; flex: none; }
.g-label { height: 20px; margin-top: 6px; white-space: nowrap; }
.g-num { display: block; width: 100%; height: 11px; margin-top: 3px; background: #c8c8c8; border-right: 1px solid #a9a9a9; border-bottom: 1px solid #a9a9a9; border-left: 1px solid #a9a9a9; font-weight: 400; font-size: 13px; line-height: 13px; text-align: center; overflow: visible; }
.g-num-on { background: #bbdaf8; }

.sash { height: 16px; flex: none; background: #f5f5f5; display: flex; align-items: center; justify-content: center; }
.tri-up { border: 5px solid transparent; border-top: 0; border-bottom: 5px solid #444; }

/* main */
.main { height: 874px; flex: none; display: flex; background: #f5f5f5; padding-left: 2px; padding-right: 3px; }

.left { width: 268px; flex: none; display: flex; flex-direction: column; background: #e9e7e2; border-right: 1px solid #b9b6b0; border-left: 1px solid #b9b6b0; padding-top: 1px; gap: 2px; }
.stat { background: #0037b3; display: flex; align-items: center; padding-left: 4px; color: #fff; flex: none; }
.h66 { height: 66px; } .h99 { height: 99px; } .h98 { height: 98px; }
.orb { width: 52px; height: 52px; }
.orb-letter { font-size: 28px; fill: #eef5fc; font-family: "Liberation Sans", sans-serif; }
.val { font-size: 27px; line-height: 40px; white-space: nowrap; display: flex; align-items: center; }
.v-car { margin-left: 83px; padding-top: 1px; }
.v-speed { margin-left: 89px; font-size: 26px; }
.v-pct { margin-left: 95px; padding-bottom: 1px; }
.v-num { margin-left: 58px; padding-bottom: 1px; }
.dim { color: #a9a9ab; }
.tofu { width: 16px; height: 33px; border: 2px solid #fff; margin-right: 6px; }
.gears { background: #0037b3; display: grid; grid-template-columns: 66px 67px 67px 67px; justify-items: center; align-items: center; color: #97979a; font-size: 25px; padding-bottom: 2px; flex: none; }
.gear-on { color: #fff; }
.status { margin: 1px 0 0 10px; display: grid; grid-template-columns: 120px 50px; row-gap: 12.500px; font-weight: 500; }
.status dt { text-align: right; white-space: nowrap; }
.status dd { margin: 0; }
.signs-wrap { display: flex; height: 164px; flex: none; background: #edeae6; border: 1px solid #c9c6c0; border-width: 1px 0; }
.signs { width: 252px; flex: none; height: 100%; overflow: hidden; display: grid; grid-template-columns: repeat(3, 84px); grid-auto-rows: 80px; background: #edeae6; }
.sign { border-right: 1px solid #cfccc7; border-bottom: 1px solid #cfccc7; display: flex; align-items: center; justify-content: center; }
.sign svg { width: 46px; height: 46px; margin: 0 2px 2px 0; }
.sign-num { font-size: 27px; font-weight: 700; fill: #fff; font-family: "Liberation Sans", sans-serif; }
.vbar { display: flex; flex-direction: column; width: 14px; flex: none; background: #e0dfdc; border: 1px solid #cfccc7; }
.vbar-left { height: 100%; }
.sb-btn { height: 13px; flex: none; background: #f4f3f1; display: flex; align-items: center; justify-content: center; border-bottom: 1px solid #cfccc7; }
.sb-low { border-top: 1px solid #cfccc7; border-bottom: 0; margin-top: auto; }
.sb-thumb { background: #fbfbfa; flex: none; }
.sb-fill { flex: 1; }
.t-signs { height: 54px; }
.t-tree { height: 219px; }
.t-right { height: 209px; }
.tri-u { border: 4px solid transparent; border-top: 0; border-bottom: 5px solid #444; }
.tri-d { border: 4px solid transparent; border-bottom: 0; border-top: 5px solid #444; }
.vbar-left .tri-u, .vbar-left .tri-d { opacity: .35; }
.stops { flex: 1; display: grid; grid-template-columns: 127px 127px; gap: 6px; padding: 5px 3px 3px 3px; margin-top: -2px; background: #edeae6; border-bottom: 1px solid #b9b6b0; }
.stop-btn { background: #edeae6; border: 2px solid #bdbbb6; border-radius: 8px; display: flex; align-items: center; justify-content: center; }
.hex { width: 60px; height: 51px; }
.hex-t { font-size: 15px; fill: #111; }

.gutter { width: 16px; flex: none; display: flex; align-items: center; justify-content: center; }
.tri-l { border: 5px solid transparent; border-left: 0; border-right: 5px solid #444; }
.tri-r { border: 5px solid transparent; border-right: 0; border-left: 5px solid #444; }

/* mid */
.mid { width: 1079px; flex: none; display: flex; flex-direction: column; background: #efece8; border: 1px solid #c8c5bf; padding: 0 9px; }
.menubar { height: 36px; flex: none; display: flex; padding-left: 11px; gap: 15px; align-items: flex-end; padding-bottom: 2px; border-bottom: 1px solid #dcd9d4; }
.toolbar { height: 39px; flex: none; display: flex; align-items: center; background: #f3f1ec; border-bottom: 1px solid #c4c1bb; padding: 2px 0 0 5px; font-size: 12px; }
.grip { width: 3px; height: 20px; border-left: 2px dotted #c4c1bb; margin-right: 5px; margin-top: -2px; }
.tool { display: flex; align-items: center; gap: 4px; padding: 0 11.500px; white-space: nowrap; height: 30px; flex: none; }
.tool-on { width: 66px; padding: 0 0 0 4px; margin: -2px -5.500px 0 0; background: #dfdcd8; border: 1px solid #b5b2ad; border-radius: 3px; gap: 3px; }
.tool-pin { gap: 6px; }
.t-ico { width: 16px; height: 16px; }
.tool-on .t-ico { width: 18px; height: 18px; }
.t-pin { width: 14px; height: 18px; }
.t-sep { width: 1px; height: 24px; background: #cfccc7; margin-left: 8px; margin-right: 13px; }
.t-mini { width: 33px; display: flex; align-items: center; }
.t-mini svg { width: 15px; height: 15px; }
.drop { border: 3px solid transparent; border-bottom: 0; border-top: 3px solid #333; margin: 14px 0 0 1px; }

.workspace { height: 655px; flex: none; display: flex; }
.dock { width: 342px; flex: none; margin-left: 1px; display: flex; flex-direction: column; }
.dock-title { height: 23px; flex: none; background: #b8b3ae; display: flex; align-items: center; padding: 0 3px 0 4px; font-size: 14px; }
.dt-ico { width: 16px; height: 16px; }
.dt-txt { margin-left: 5px; flex: 1; padding-top: 1px; }
.dt-x { width: 17px; height: 17px; background: #f4f3f1; border: 1px solid #a9a6a1; border-radius: 2px; font-size: 9px; line-height: 15px; text-align: center; color: #444; }
.tree-box { display: flex; height: 557px; flex: none; background: #fff; border: 1px solid #b5b2ad; border-top: 0; }
.tree { width: 325px; flex: none; overflow: hidden; height: 100%; padding-top: 1px; }
.row { display: grid; grid-template-columns: 208px 118px; height: 19px; line-height: 19px; font-size: 15px; white-space: nowrap; }
.n { display: flex; align-items: center; min-width: 0; padding-left: 5px; }
.n.sub { padding-left: 42px; }
.v { display: flex; align-items: center; border-left: 1px solid #dcdad6; padding-left: 1px; }
.lat { font-size: 14.500px; }
.sel { background: #308cc6; color: #fff; margin-top: -0.500px; }
.sel .v { border-left-color: #308cc6; }
.c-b { color: #3478c8; font-weight: 700; }
.c-o { color: #c6870f; font-weight: 700; }
.ar { width: 0; height: 0; border: 4px solid transparent; border-left: 5px solid #333; border-right: 0; margin-right: 12px; flex: none; }
.ar-d { border: 4px solid transparent; border-top: 5px solid #333; border-bottom: 0; margin-right: 9px; margin-left: -2px; }
.ti { width: 16px; height: 16px; margin-right: 6px; flex: none; }
.swatch { width: 13px; height: 13px; background: #303030; border: 1px solid #555; margin: 0 4px 0 3px; }
.chk { width: 13px; height: 13px; background: #fff; border: 1px solid #b5b2ad; display: block; flex: none; position: relative; }
.chk.on::after { content: ""; position: absolute; left: 3px; top: 0; width: 5px; height: 9px; border: solid currentColor; border-width: 0 2px 2px 0; transform: rotate(38deg); }
.ck-k { color: #111; } .ck-b { color: #2d6cb5; } .ck-o { color: #b8860b; }
.handle { height: 12px; flex: none; }
.dock-btns { display: flex; gap: 6px; padding-left: 1px; flex: none; }
.btn { width: 80px; height: 30px; border: 1px solid #a9a6a1; border-radius: 3px; background: linear-gradient(#fbfbfa, #eeedea); color: #111; font-size: 15px; line-height: 20px; }
.btn:disabled { color: #b8b6b2; border-color: #d0cdc8; background: linear-gradient(#f4f2ef, #ecebe7); }
.dock-tabs { display: flex; margin-top: 6px; height: 25px; flex: none; }
.dtab { height: 25px; line-height: 24px; padding: 0 11px; background: #dfdcd8; border: 1px solid #b5b2ad; border-radius: 3px 3px 0 0; font-size: 15px; width: 114px; white-space: nowrap; }
.dtab-on { background: #efece8; border-top-color: transparent; border-left: 0; border-bottom: 0; width: 79px; font-size: 14px; }
.dtab-line { flex: 1; border-top: 1px solid #b5b2ad; }
.view-arrow { width: 21px; flex: none; display: flex; align-items: center; justify-content: flex-end; padding-right: 5px; }
.viewport { width: 678px; height: 655px; flex: none; }
.lbl { font-family: "Liberation Sans", sans-serif; font-size: 18px; fill: #eeeeee; }
.lbl-sq { font-size: 38px; }
.lbl-sm { font-size: 13px; }
.lbl-md { font-size: 15px; }
.view-strip { width: 16px; margin-left: 2px; flex: none; background: #dedcd8; border: 1px solid #cfccc7; border-radius: 2px; display: flex; align-items: center; justify-content: center; }
.bar-handle { height: 7px; flex: none; }

.time { flex: 1; display: flex; flex-direction: column; }
.time-title { padding-left: 3px; height: 22px; }
.time-title .dt-txt { margin-left: 7px; }
.time-row { display: flex; align-items: center; margin-top: 22px; height: 24px; padding-left: 11px; font-size: 14.500px; white-space: nowrap; flex: none; }
.time-row label { display: block; }
.w1 { width: 72px; } .w2 { width: 102px; } .w3 { width: 69px; } .w4 { width: 99px; }
.inp { width: 142px; height: 24px; line-height: 22px; padding-left: 3px; background: #fff; border: 1px solid #aeaba6; border-radius: 2px; margin-right: 6px; flex: none; }
.time-foot { display: flex; justify-content: space-between; align-items: flex-start; margin-top: 27px; padding-left: 2px; flex: none; }
.btn-reset { width: 103px; height: 29px; font-size: 14.500px; }
.fps { font-size: 14.500px; line-height: 18px; padding-right: 1px; margin-top: -1px; }

/* right */
.right { width: 536px; flex: none; display: flex; flex-direction: column; }
.crumb { height: 35px; flex: none; background: #b8b3ae; line-height: 36px; padding-left: 5px; word-spacing: -.5px; }
.right-body { flex: 1; min-height: 0; display: flex; border-left: 2px solid #b8b3ae; border-bottom: 2px solid #b8b3ae; background: #efedE8; }
.cfg { flex: 1; overflow: hidden; padding: 15px 0 0 9px; }
.g-title { width: fit-content; height: 16px; line-height: 18px; padding: 0 4px; margin: 0 0 -1px 4px; background: #efedE8; position: relative; z-index: 1; }
.g-box { width: 502px; border: 1px solid #d5d2cd; border-radius: 2px; background: #ebe8e3; padding: 31px 11px 10px; display: flex; flex-direction: column; gap: 27px; margin-bottom: 13px; }
.g-tight { margin-bottom: 12.500px; }
.opt { height: 51px; flex: none; background: #e8e5e0; border: 1px solid #d8d5d0; border-radius: 2px; display: flex; align-items: center; padding: 0 11px 0 10px; gap: 6px; }
.opt span { flex: 1; word-spacing: -1.500px; }
.opt .lat-opt { font-size: 14.300px; }
.cfg-btn { width: 62px; height: 28px; flex: none; }
.vbar-tree { height: 100%; border-width: 0 0 0 1px; }
.footer { flex: 1; text-align: center; line-height: 28px; font-size: 15px; background: #efedE8; position: relative; }
.mark { position: absolute; right: 14px; top: -4px; line-height: 22px; font-family: "Liberation Sans", sans-serif; font-size: 18px; color: #b9b9b9; }
```
